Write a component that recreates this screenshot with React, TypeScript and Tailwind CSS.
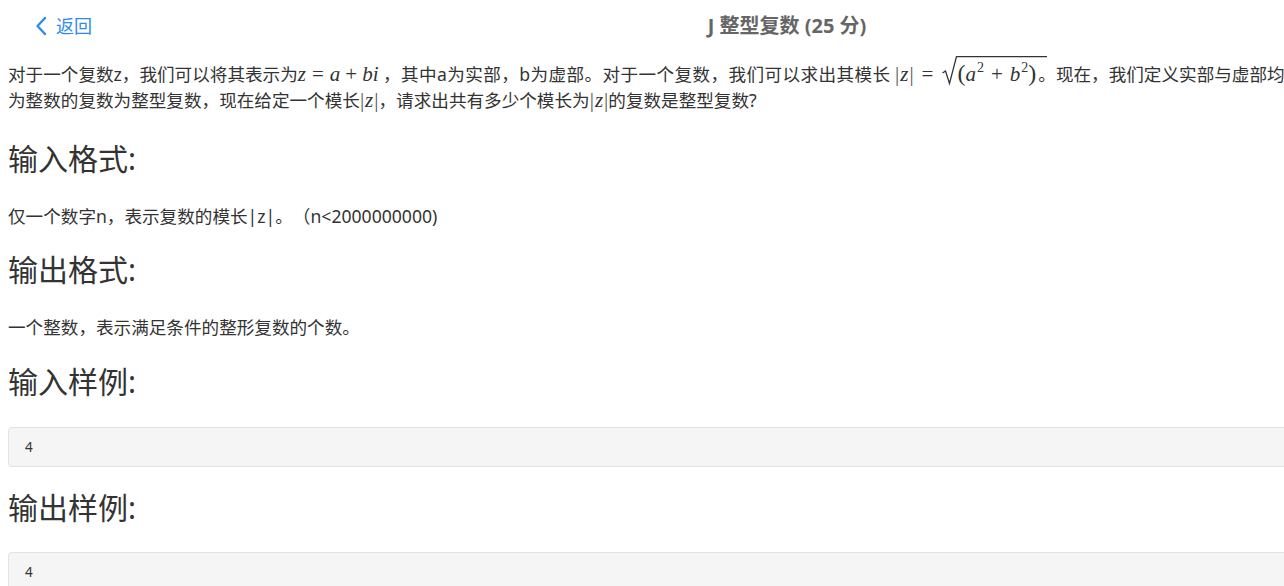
import React from "react";

const serif = "font-['Liberation_Serif',serif]";

const Abs = () => (
  <span className={`${serif} text-[21px] leading-none`}>
    <span className="text-[#555]">|</span>
    <span className="italic mx-[1px]">z</span>
    <span className="text-[#555]">|</span>
  </span>
);

function Math1() {
  return (
    <span className={`${serif} text-[21px] leading-none`}>
      <span className="italic">z</span>
      <span className="mx-[6px]">=</span>
      <span className="italic">a</span>
      <span className="mx-[5px]">+</span>
      <span className="italic">bi</span>
    </span>
  );
}

function Math2() {
  return (
    <span className={`${serif} text-[21px] leading-none`}>
      <span className="text-[#555]">|</span>
      <span className="italic mx-[1px]">z</span>
      <span className="text-[#555]">|</span>
      <span className="mx-[8px]">=</span>
      <span className="relative pl-[16px]">
        <svg
          width="17"
          height="30"
          viewBox="0 0 17 30"
          className="absolute left-0 top-[-6px] overflow-visible"
        >
          <path d="M1.5 17 L4.5 15 L8.5 27.5 L15.5 0.7 L106 0.7" fill="none" stroke="#333" strokeWidth="1.3" />
        </svg>
        <span className="text-[24px]">(</span>
        <span className="italic">a</span>
        <span className="text-[14px] relative -top-[9px] ml-[1px]">2</span>
        <span className="mx-[7px]">+</span>
        <span className="italic">b</span>
        <span className="text-[14px] relative -top-[9px] ml-[1px]">2</span>
        <span className="text-[24px] mr-[2px]">)</span>
      </span>
    </span>
  );
}

export default function App() {
  return (
    <div className="w-full h-[586px] overflow-hidden bg-white font-['Noto_Sans','Noto_Sans_CJK_SC',sans-serif] text-[#333] [text-spacing-trim:space-all]">
      <div className="w-[1574px]">
        <header className="grid grid-cols-[1fr_auto_1fr] items-center h-[52px]">
          <div className="flex items-center pl-[35px] text-[#2d8cf0] text-[18px]">
            <svg width="12" height="20" viewBox="0 0 12 20">
              <path d="M10 2 L2.5 10 L10 18" fill="none" stroke="#2d8cf0" strokeWidth="2.4" strokeLinecap="round" strokeLinejoin="round" />
            </svg>
            <span className="ml-[9px]">返回</span>
          </div>
          <div className="font-bold text-[20px] text-[#666]">J 整型复数 (25 分)</div>
          <div />
        </header>
        <div className="px-[8px]">
          <p className="mt-[9px] text-[17.6px] leading-[26.4px] whitespace-nowrap">
            对于一个复数z，我们可以将其表示为<Math1 /> <span className="tracking-[0.4px]">，其中a为实部，b为虚部。对于一个复数，我们可以求出其模长</span> <Math2 />。现在，我们定义实部与虚部均
            <br />
            为整数的复数为整型复数，现在给定一个模长<Abs />，请求出共有多少个模长为<Abs />的复数是整型复数?
          </p>
          <h2 className="mt-[28px] text-[30px] leading-[33px] text-[#333]">输入格式:</h2>
          <p className="mt-[28px] text-[17.6px] leading-[26.4px]">仅一个数字n，表示复数的模长|z|。（n&lt;2000000000)</p>
          <h2 className="mt-[24px] text-[30px] leading-[33px] text-[#333]">输出格式:</h2>
          <p className="mt-[28px] text-[17.6px] leading-[26.4px]">一个整数，表示满足条件的整形复数的个数。</p>
          <h2 className="mt-[24px] text-[30px] leading-[33px] text-[#333]">输入样例:</h2>
          <pre className="mt-[29px] h-[40px] bg-[#f5f5f5] border border-[#e3e3e3] rounded-[4px] pl-[16px] flex items-center text-[13.5px] font-['Noto_Sans',sans-serif] text-[#333]">4</pre>
          <h2 className="mt-[24px] text-[30px] leading-[33px] text-[#333]">输出样例:</h2>
          <pre className="mt-[28px] h-[40px] bg-[#f5f5f5] border border-[#e3e3e3] rounded-[4px] pl-[16px] flex items-center text-[13.5px] font-['Noto_Sans',sans-serif] text-[#333]">4</pre>
        </div>
      </div>
    </div>
  );
}
